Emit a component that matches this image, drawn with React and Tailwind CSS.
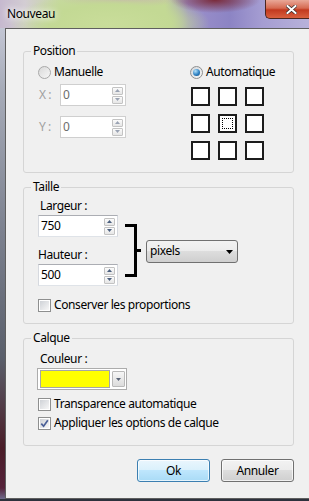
import React from 'react'

function SpinBtn({ up, disabled }) {
  return (
    <div className="w-[11px] h-[8px] flex items-center justify-center rounded-[1px] border border-[#c3c3c3] [background-image:linear-gradient(#fbfbfb,#e6e6e6)]">
      <svg width="5" height="3" viewBox="0 0 5 3">
        <polygon
          points={up ? '0,3 2.5,0 5,3' : '0,0 2.5,3 5,0'}
          fill={disabled ? '#9aa3b3' : '#4c607f'}
        />
      </svg>
    </div>
  )
}

function SpinInput({ value, disabled, className }) {
  return (
    <div
      className={
        'flex items-center h-[22px] bg-white border ' +
        (disabled
          ? 'border-[#cfcfcf] text-[#6d6d6d] '
          : 'border-[#abadb3] border-x-[#d6d9df] border-b-[#dfe3e8] ') +
        className
      }
    >
      <span className="flex-1 pl-[2px]">{value}</span>
      <div className="flex flex-col gap-[1px] mr-[2px]">
        <SpinBtn up disabled={disabled} />
        <SpinBtn disabled={disabled} />
      </div>
    </div>
  )
}

function Radio({ checked, dim }) {
  return (
    <div
      className={
        'w-[13px] h-[13px] shrink-0 rounded-full border flex items-center justify-center ' +
        (dim
          ? 'border-[#a9a9a9] [background-image:linear-gradient(135deg,#d9d9d9,#f7f7f7)]'
          : 'border-[#8e8f8f] [background-image:linear-gradient(135deg,#d4d7db,#f7f7f7)]')
      }
    >
      {checked && (
        <div className="w-[7px] h-[7px] rounded-full bg-[radial-gradient(circle_at_35%_30%,#b4e2fa,#2f82c4_55%,#0e4676)]" />
      )}
    </div>
  )
}

function Check({ checked }) {
  return (
    <div className="w-[13px] h-[13px] shrink-0 border border-[#8e8f8f] bg-white p-[1px]">
      <div className="w-full h-full flex items-center justify-center [background-image:linear-gradient(135deg,#cfd2d7,#f7f7f7)]">
        {checked && (
          <svg width="9" height="9" viewBox="0 0 9 9">
            <path d="M1.3 4.6 L3.6 7.2 L7.8 1.3" fill="none" stroke="#4a5f97" strokeWidth="1.7" />
          </svg>
        )}
      </div>
    </div>
  )
}

function Group({ title, className, children }) {
  return (
    <fieldset className={'border border-[#d5d5d5] rounded-[3px] ' + className}>
      <legend className="ml-[7px] px-[2px] leading-[16px]">{title}</legend>
      {children}
    </fieldset>
  )
}

function Square({ center }) {
  return (
    <div className="w-[19px] h-[19px] border-2 border-[#1c1c1c] bg-white flex items-center justify-center">
      {center && <div className="w-[11px] h-[11px] border border-dotted border-black" />}
    </div>
  )
}

export default function App() {
  return (
    <div className="w-[309px] h-[501px] overflow-hidden flex flex-col font-['Noto_Sans',sans-serif] text-[12px] leading-[16px] tracking-[-0.4px] text-black bg-[#2d313c]">

      {/* Title bar (glass) */}
      <div className="h-[28px] shrink-0 flex items-start [background-image:radial-gradient(ellipse_100px_32px_at_110px_24px,#c9dd9a_0%,#c3d994_60%,transparent_100%),radial-gradient(ellipse_45px_13px_at_215px_0px,#7a2b3b_0%,transparent_100%),radial-gradient(ellipse_60px_8px_at_120px_0px,#c9a3bc_0%,transparent_100%),linear-gradient(to_right,#c6b9cf_0px,#d3cdd3_25px,#c6d99f_60px,#c3d994_165px,#9c90cb_188px,#8c84c4_230px,#a59dd2_262px,#b8b2da_309px)]">
        <div className="pl-[7px] pt-[6px] [text-shadow:0_0_6px_#fff,0_0_10px_#fff]">Nouveau</div>
        <div className="ml-auto w-[44px] h-[19px] rounded-bl-[5px] border-l border-b border-[#4a2520] flex items-center pl-[20px] [background-image:linear-gradient(#e9a898,#d66a52_45%,#c2391f_55%,#d9603f)]">
          <svg width="11" height="9" viewBox="0 0 11 9">
            <path d="M1.5 1 L9.5 8 M9.5 1 L1.5 8" stroke="#3a2a2a" strokeWidth="3.4" strokeLinecap="square" />
            <path d="M1.5 1 L9.5 8 M9.5 1 L1.5 8" stroke="#ffffff" strokeWidth="2" strokeLinecap="square" />
          </svg>
        </div>
      </div>

      <div className="flex flex-1 min-h-0">
        {/* left frame */}
        <div className="w-[5px] shrink-0 [background-image:linear-gradient(to_bottom,#c3c6d4,#a7acb9_60px,#7d8290_200px,#5a5f6b_330px,#4a1d28_420px,#55223a_460px,#7f9ac0_478px,#3a3f4d)]" />

        {/* client area */}
        <div className="flex-1 flex flex-col bg-[#f0f0f0] border-l border-t border-b border-[#5f5f5f] pl-[17px] pr-[15px] pt-[14px]">

          {/* Position */}
          <Group title="Position">
            <div className="flex pt-[5px] pb-[12px] pl-[14px]">
              <div className="w-[152px] shrink-0">
                <div className="flex items-center gap-[3px] h-[16px]">
                  <Radio dim />
                  <span>Manuelle</span>
                </div>
                <div className="flex items-center mt-[4px]">
                  <span className="w-[22px] pl-[1px] text-[#a0a0a0]">X :</span>
                  <SpinInput value="0" disabled className="w-[66px]" />
                </div>
                <div className="flex items-center mt-[10px]">
                  <span className="w-[22px] pl-[1px] text-[#a0a0a0]">Y :</span>
                  <SpinInput value="0" disabled className="w-[66px]" />
                </div>
              </div>
              <div>
                <div className="flex items-center gap-[3px] h-[16px]">
                  <Radio checked />
                  <span>Automatique</span>
                </div>
                <div className="grid grid-cols-3 gap-[8px] mt-[7px] pl-[1px] w-fit">
                  <Square />
                  <Square />
                  <Square />
                  <Square />
                  <Square center />
                  <Square />
                  <Square />
                  <Square />
                  <Square />
                </div>
              </div>
            </div>
          </Group>

          {/* Taille */}
          <Group title="Taille" className="mt-[6px]">
            <div className="pt-[3px] pb-[10px] pl-[14px]">
              <div className="flex items-start">
                <div className="w-[80px] shrink-0">
                  <div className="pl-[2px]">Largeur :</div>
                  <SpinInput value="750" className="w-[80px] mt-[1px]" />
                  <div className="mt-[10px]">Hauteur :</div>
                  <SpinInput value="500" className="w-[80px] mt-[1px]" />
                </div>
                <svg width="16" height="53" viewBox="0 0 16 53" className="ml-[7px] mt-[26px] shrink-0">
                  <rect x="0" y="0" width="12" height="3" fill="#000" />
                  <rect x="9" y="0" width="3" height="53" fill="#000" />
                  <rect x="0" y="50" width="12" height="3" fill="#000" />
                  <rect x="12" y="25" width="4" height="3" fill="#000" />
                </svg>
                <div className="ml-[5px] mt-[42px] w-[92px] h-[23px] rounded-[3px] border border-[#707070] flex items-center justify-between pl-[3px] pr-[4px] [background-image:linear-gradient(#f2f2f2,#ebebeb_50%,#dddddd_50%,#cfcfcf)]">
                  <span className="-mt-[2px]">pixels</span>
                  <svg width="7" height="4" viewBox="0 0 7 4">
                    <polygon points="0,0 7,0 3.5,4" fill="#000" />
                  </svg>
                </div>
              </div>
              <div className="flex items-center gap-[3px] h-[16px] mt-[11px]">
                <Check />
                <span>Conserver les proportions</span>
              </div>
            </div>
          </Group>

          {/* Calque */}
          <Group title="Calque" className="mt-[6px]">
            <div className="pt-[5px] pb-[14px] pl-[14px]">
              <div className="pl-[2px]">Couleur :</div>
              <div className="mt-[1px] -ml-[1px] w-[90px] h-[22px] border border-[#acacac] bg-white flex items-center pl-[2px] gap-[2px]">
                <div className="w-[70px] h-[18px] bg-[#ffff00] border border-[#a6a6a6]" />
                <div className="w-[13px] h-[16px] border border-[#b9b9b9] rounded-[1px] flex items-center justify-center [background-image:linear-gradient(#f6f6f6,#dcdcdc)]">
                  <svg width="5" height="3" viewBox="0 0 5 3">
                    <polygon points="0,0 2.5,3 5,0" fill="#5a6478" />
                  </svg>
                </div>
              </div>
              <div className="flex items-center gap-[3px] h-[16px] mt-[6px]">
                <Check />
                <span>Transparence automatique</span>
              </div>
              <div className="flex items-center gap-[3px] h-[16px] mt-[3px]">
                <Check checked />
                <span>Appliquer les options de calque</span>
              </div>
            </div>
          </Group>

          {/* Buttons */}
          <div className="flex justify-end gap-[11px] mt-[13px]">
            <button className="w-[73px] h-[23px] rounded-[3px] border border-[#3c7fb1] shadow-[inset_0_0_0_1px_rgba(255,255,255,0.7)] [background-image:linear-gradient(#eaf6fd,#d9f0fc_50%,#bee6fd_50%,#a9dbf6)]">
              Ok
            </button>
            <button className="w-[73px] h-[23px] rounded-[3px] border border-[#707070] shadow-[inset_0_0_0_1px_rgba(255,255,255,0.7)] [background-image:linear-gradient(#f2f2f2,#ebebeb_50%,#dddddd_50%,#cfcfcf)]">
              Annuler
            </button>
          </div>
        </div>
      </div>

      {/* bottom frame */}
      <div className="h-[2px] shrink-0 bg-[#2d313c]" />
    </div>
  )
}
